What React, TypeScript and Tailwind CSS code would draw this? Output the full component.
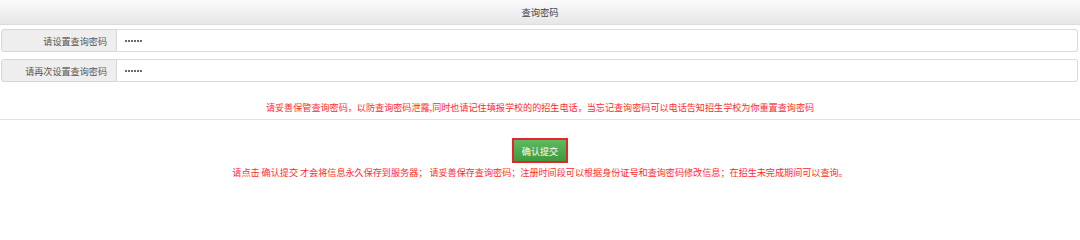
import React from "react";

export default function App() {
  const font = { fontFamily: '"Noto Sans CJK SC", "Noto Sans", sans-serif' };
  const dots = [0, 1, 2, 3, 4, 5];
  return (
    <div className="w-[1080px] h-[212px] bg-white text-[9.1px] leading-[12px]" style={font}>
      <div className="h-[25px] flex items-center justify-center border-b border-[#dcdcdc] bg-gradient-to-b from-[#fafafa] to-[#e7e7e7] text-[#444] text-[9.3px]">
        查询密码
      </div>
      <div className="pl-[1px] pr-[2px] pt-[4px] flex flex-col gap-[7px]">
        {["请设置查询密码", "请再次设置查询密码"].map((label) => (
          <div key={label} className="flex h-[23px]">
            <div className="w-[116px] flex items-center justify-end pr-[9px] bg-[#eeeeee] border border-[#d6d6d6] rounded-l-[3px] text-[#555]">
              {label}
            </div>
            <div className="flex-1 flex items-center pl-[8px] bg-white border border-l-0 border-[#dadada] rounded-r-[3px]">
              <div className="flex gap-[1px] mt-[1px]">
                {dots.map((d) => (
                  <span key={d} className="w-[2px] h-[2px] bg-[#6a6a6a]" />
                ))}
              </div>
            </div>
          </div>
        ))}
      </div>
      <div className="h-[38px] flex items-start justify-center text-[#ff2a2a] border-b border-[#e2e2e2] pt-[19px]">
        请妥善保管查询密码，以防查询密码泄露,同时也请记住填报学校的的招生电话，当忘记查询密码可以电话告知招生学校为你重置查询密码
      </div>
      <div className="flex justify-center pt-[18px]">
        <div className="w-[56px] h-[25px] border-2 border-[#e3262b] flex items-center justify-center bg-gradient-to-b from-[#5fb95f] to-[#3f9a3f] text-white">
          确认提交
        </div>
      </div>
      <div className="flex justify-center pt-[3px] text-[#ff2a2a]">
        请点击 确认提交 才会将信息永久保存到服务器； 请妥善保存查询密码；注册时间段可以根据身份证号和查询密码修改信息；在招生未完成期间可以查询。
      </div>
    </div>
  );
}
